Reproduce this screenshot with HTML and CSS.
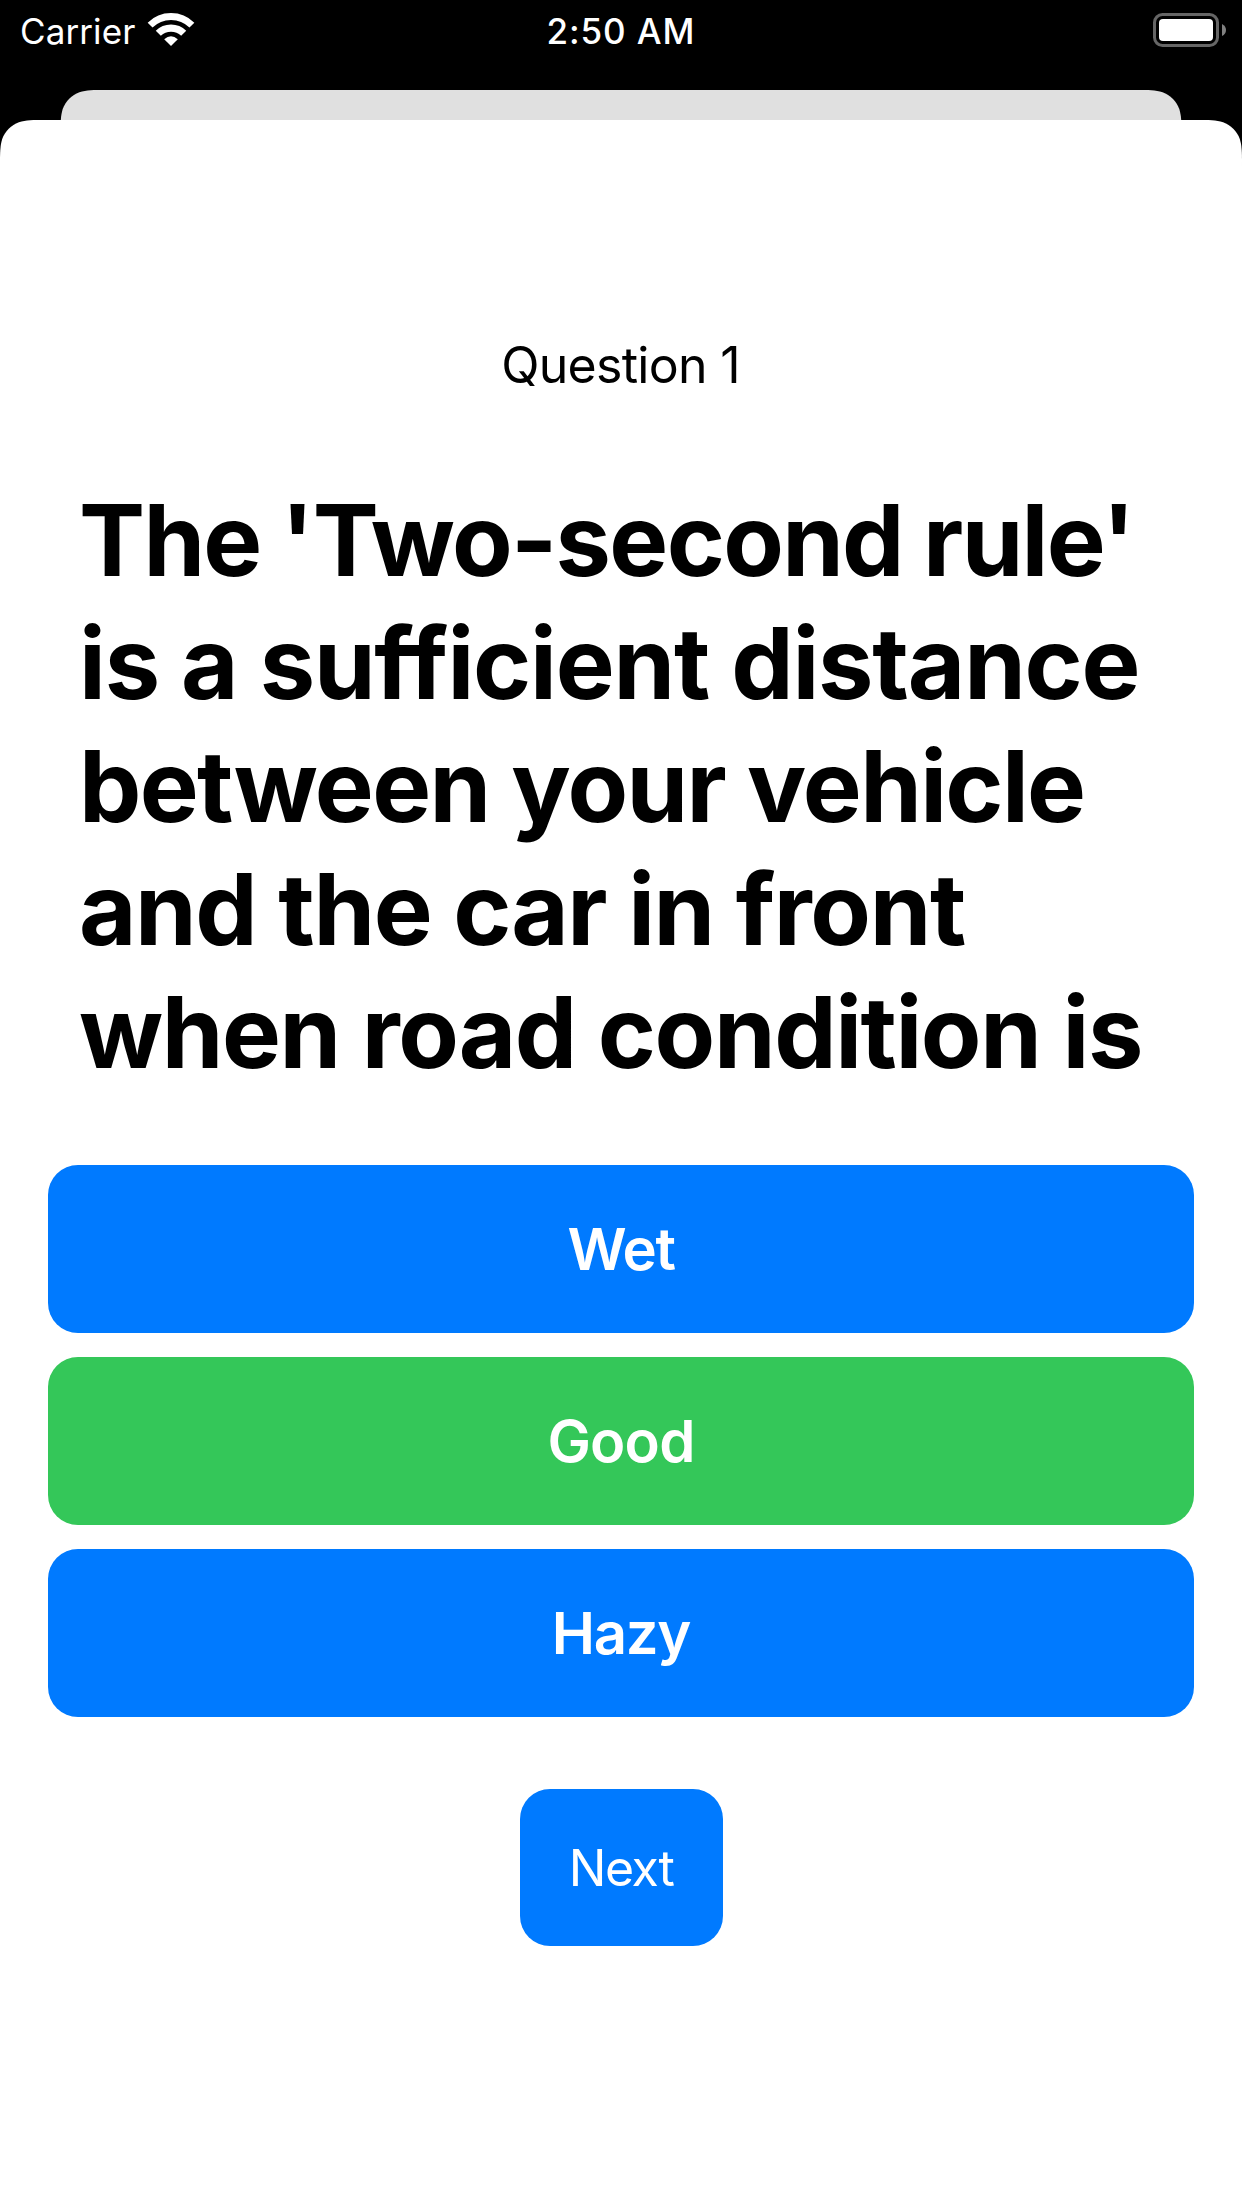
FILE: index.html
```html
<!DOCTYPE html>
<html lang="en">
<head>
<meta charset="utf-8">
<title>Question 1</title>
<link rel="stylesheet" href="styles.css">
</head>
<body>
<header class="status-bar">
  <div class="status-left">
    <span class="carrier">Carrier</span>
    <svg class="wifi" width="48" height="36" viewBox="0 0 48 36" aria-hidden="true">
      <g fill="none" stroke="#fff">
        <path d="M3.1 13.1A29.6 29.6 0 0 1 44.9 13.1" stroke-width="6.9"/>
        <path d="M11.3 21.3A18 18 0 0 1 36.7 21.3" stroke-width="7.2"/>
      </g>
      <path d="M24 34L17.2 27.2Q24 21.3 30.8 27.2Z" fill="#fff"/>
    </svg>
  </div>
  <span class="time">2:50 AM</span>
  <svg class="battery" width="74" height="34" viewBox="0 0 74 34" aria-hidden="true">
    <rect x="1.5" y="1.5" width="63" height="31" rx="8" fill="none" stroke="#666" stroke-width="3"/>
    <rect x="6" y="6" width="54" height="22" rx="4" fill="#fff"/>
    <path d="M69 11Q73 13 73 17T69 23Z" fill="#808080"/>
  </svg>
</header>
<svg class="sheet-edge" width="1242" height="104" viewBox="0 0 1242 104" aria-hidden="true">
  <path fill="#e0e0e0" d="M60.5 73.9C60.5 60.7 60.5 54.1 62.7 46.9C65.6 39.2 71.7 33.1 79.4 30.2C86.6 28 93.2 28 106.4 28H1135.6C1148.8 28 1155.4 28 1162.6 30.2C1170.3 33.1 1176.4 39.2 1179.3 46.9C1181.5 54.1 1181.5 60.7 1181.5 73.9Z"/>
  <path fill="#fff" d="M0 104C0 90.7 0 84.1 2.2 77C5.1 69.2 11.2 63.1 18.9 60.3C26 58 32.7 58 45.9 58H1196.1C1209.3 58 1216 58 1223.1 60.3C1230.8 63.1 1236.9 69.2 1239.8 77C1242 84.1 1242 90.7 1242 104Z"/>
</svg>
<main class="sheet">
  <p class="counter">Question 1</p>
  <h1 class="question">
    <span class="line tight">The 'Two-second rule'</span>
    <span class="line loose">is a sufficient distance</span>
    <span class="line even">between your vehicle</span>
    <span class="line">and the car in front</span>
    <span class="line">when road condition is</span>
  </h1>
  <div class="answers">
    <button class="answer">Wet</button>
    <button class="answer correct">Good</button>
    <button class="answer">Hazy</button>
  </div>
  <button class="next">Next</button>
</main>
</body>
</html>
```
FILE: styles.css
```css
* {
  box-sizing: border-box;
}

body {
  margin: 0;
  width: 1242px;
  height: 2208px;
  display: flex;
  flex-direction: column;
  overflow: hidden;
  background: #000;
  font-family: Inter, "Liberation Sans", sans-serif;
}

.status-bar {
  display: grid;
  grid-template-columns: 1fr auto 1fr;
  height: 62px;
  padding: 0 20px;
  color: #fff;
  font-size: 35px;
  line-height: 62px;
}

.status-left {
  display: flex;
}

.carrier {
  letter-spacing: 0.1px;
}

.wifi {
  margin: 12px 0 0 12px;
}

.time {
  font-weight: 500;
  letter-spacing: 0.9px;
}

.battery {
  justify-self: end;
  margin: 13px -5px 0 0;
}

.sheet-edge {
  display: block;
  flex: none;
}

.sheet {
  flex: 1;
  display: flex;
  flex-direction: column;
  align-items: center;
  padding: 169px 48px 0;
  background: #fff;
  color: #000;
}

.counter {
  margin: 0;
  padding-right: 1px;
  font-size: 50px;
  line-height: 60px;
  letter-spacing: -0.7px;
}

.question {
  align-self: stretch;
  margin: 84px 0 71px;
  padding-left: 31px;
  font-size: 99px;
  font-weight: 700;
  line-height: 123px;
  letter-spacing: -1.4px;
  white-space: nowrap;
}

.line {
  display: block;
}

.tight {
  letter-spacing: -1.7px;
  word-spacing: -1.5px;
}

.loose {
  letter-spacing: -1.2px;
}

.even {
  letter-spacing: -1.65px;
}

.answers {
  align-self: stretch;
  display: flex;
  flex-direction: column;
  gap: 24px;
}

.answer,
.next {
  border: 0;
  border-radius: 30px;
  background: #007aff;
  color: #fff;
  font-family: inherit;
}

.answer {
  height: 168px;
  padding: 0;
  font-size: 58px;
  font-weight: 600;
  letter-spacing: -1.3px;
}

.correct {
  background: #34c759;
  letter-spacing: -0.8px;
}

.next {
  width: 203px;
  height: 157px;
  margin-top: 72px;
  padding: 0;
  font-size: 50px;
  letter-spacing: -1.4px;
}
```
